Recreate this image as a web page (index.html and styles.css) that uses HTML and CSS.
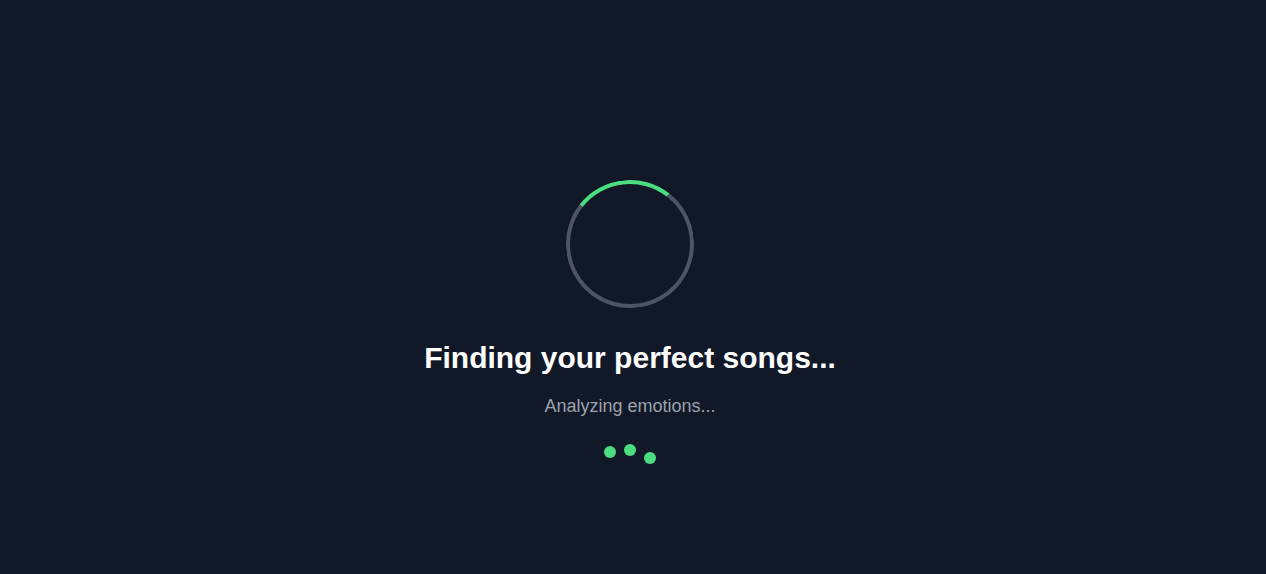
FILE: index.html
```html
<!DOCTYPE html>
<html lang="en">
<head>
<meta charset="utf-8">
<title>Finding your perfect songs</title>
<link rel="stylesheet" href="styles.css">
</head>
<body>
<main class="loader">
  <div class="spinner"></div>
  <h1 class="title">Finding your perfect songs...</h1>
  <p class="subtitle">Analyzing emotions...</p>
  <div class="dots">
    <span class="dot dot-1"></span>
    <span class="dot dot-2"></span>
    <span class="dot dot-3"></span>
  </div>
</main>
</body>
</html>
```
FILE: styles.css
```css
* { box-sizing: border-box; }
html, body {
  margin: 0;
  padding: 0;
  background: #111827;
  height: 100%;
}
body {
  font-family: "Liberation Sans", Arial, Helvetica, sans-serif;
  color: #ffffff;
}
.loader {
  display: flex;
  flex-direction: column;
  align-items: center;
  padding-top: 180px;
  padding-right: 6px;
}
.spinner {
  width: 128px;
  height: 128px;
  border-radius: 50%;
  border: 4px solid #4b5563;
  border-top-color: #4ade80;
  transform: rotate(-7deg);
  margin-bottom: 32px;
}
.title {
  margin: 0 0 16px;
  font-size: 30px;
  line-height: 36px;
  font-weight: 700;
  color: #ffffff;
}
.subtitle {
  margin: 0;
  font-size: 18px;
  line-height: 28px;
  color: #9ca3af;
}
.dots {
  display: flex;
  gap: 8px;
  margin-top: 24px;
}
.dot {
  width: 12px;
  height: 12px;
  border-radius: 50%;
  background: #4ade80;
}
.dot-1 { transform: translateY(2px); }
.dot-2 { transform: translateY(0); }
.dot-3 { transform: translateY(8px); }
```
